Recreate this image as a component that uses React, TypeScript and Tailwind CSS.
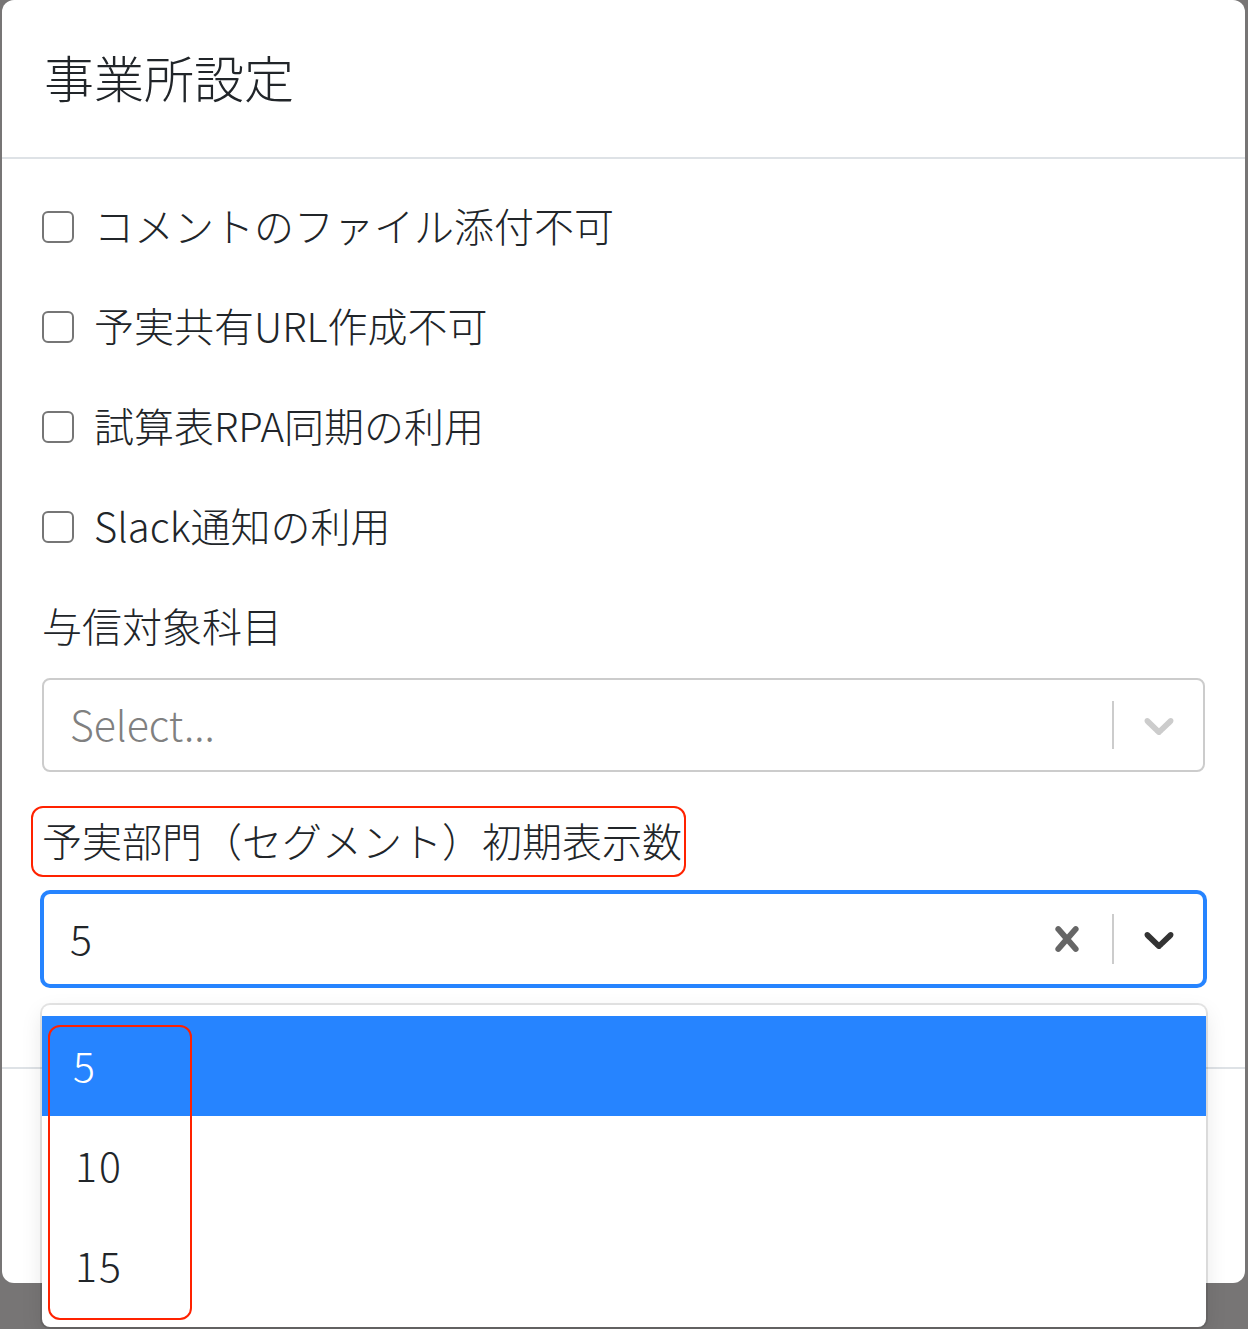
import React from "react";

const FONT = { fontFamily: '"Noto Sans CJK JP", "Noto Sans", sans-serif' };

function Chevron({ className }: { className: string }) {
  return (
    <svg viewBox="0 0 20 20" className={className} fill="currentColor" aria-hidden="true">
      <path d="M4.516 7.548c0.436-0.446 1.043-0.481 1.576 0l3.908 3.747 3.908-3.747c0.533-0.481 1.141-0.446 1.574 0 0.436 0.445 0.408 1.197 0 1.615-0.406 0.418-4.695 4.502-4.695 4.502-0.217 0.223-0.502 0.335-0.787 0.335s-0.57-0.112-0.789-0.335c0 0-4.287-4.084-4.695-4.502s-0.436-1.17 0-1.615z" />
    </svg>
  );
}

function Cross({ className }: { className: string }) {
  return (
    <svg viewBox="0 0 20 20" className={className} fill="currentColor" aria-hidden="true">
      <path d="M14.348 14.849c-0.469 0.469-1.229 0.469-1.697 0l-2.651-3.030-2.651 3.029c-0.469 0.469-1.229 0.469-1.697 0-0.469-0.469-0.469-1.229 0-1.697l2.758-3.15-2.759-3.152c-0.469-0.469-0.469-1.228 0-1.697s1.228-0.469 1.697 0l2.652 3.031 2.651-3.031c0.469-0.469 1.228-0.469 1.697 0s0.469 1.229 0 1.697l-2.758 3.152 2.758 3.15c0.469 0.469 0.469 1.229 0 1.698z" />
    </svg>
  );
}

function CheckRow({ label }: { label: string }) {
  return (
    <div className="flex h-[100px] items-center gap-[20px]">
      <span className="h-[32px] w-[32px] shrink-0 rounded-[6px] border-2 border-[#767676] bg-white" />
      <span className="pb-[4px] text-[40px] font-light leading-none text-[#212529]">{label}</span>
    </div>
  );
}

export default function App() {
  return (
    <div className="relative h-[1329px] w-[1248px] overflow-hidden bg-[#777575]" style={FONT}>
      <div className="ml-[2px] flex h-[1283px] w-[1243px] flex-col rounded-[12px] bg-white">
        {/* header */}
        <div className="flex h-[159px] shrink-0 items-center border-b-2 border-[#dee2e6] px-[42px]">
          <h2 className="pb-[6px] text-[50px] font-light leading-none text-[#212529]">事業所設定</h2>
        </div>

        {/* body */}
        <div className="h-[908px] shrink-0 px-[40px] pt-[18px]">
          <CheckRow label="コメントのファイル添付不可" />
          <CheckRow label="予実共有URL作成不可" />
          <CheckRow label="試算表RPA同期の利用" />
          <CheckRow label="Slack通知の利用" />

          <div className="flex h-[100px] items-center pb-[4px] text-[40px] font-light leading-none text-[#212529]">与信対象科目</div>

          <div className="mb-[19px] mt-[1px] flex h-[94px] items-center rounded-[8px] border-2 border-[#cccccc] bg-white">
            <div className="flex-1 pb-[4px] pl-[26px] text-[41px] font-light leading-none text-[#808080]">Select...</div>
            <span className="h-[48px] w-[2px] bg-[#cccccc]" />
            <div className="flex w-[89px] items-center justify-center text-[#cccccc]">
              <Chevron className="h-[50px] w-[50px]" />
            </div>
          </div>

          <div className="relative flex h-[101px] items-center">
            <span className="pb-[4px] text-[40px] font-light leading-none text-[#212529]">予実部門（セグメント）初期表示数</span>
            <span className="pointer-events-none absolute left-[-11px] top-[15px] h-[71px] w-[655px] rounded-[12px] border-2 border-[#ff2200]" />
          </div>

          <div className="relative">
            <div className="flex h-[94px] items-center rounded-[8px] border-2 border-[#2684ff] bg-white shadow-[0_0_0_2px_#2684ff]">
              <div className="flex-1 pb-[4px] pl-[26px] text-[41px] font-light leading-none text-[#212529]">5</div>
              <div className="flex w-[90px] items-center justify-center text-[#666666]">
                <Cross className="h-[50px] w-[50px]" />
              </div>
              <span className="h-[50px] w-[2px] bg-[#cccccc]" />
              <div className="flex w-[89px] items-center justify-center text-[#333333]">
                <Chevron className="h-[50px] w-[50px]" />
              </div>
            </div>

            {/* menu */}
            <div className="absolute left-0 right-[-1px] top-[113px] z-10 h-[322px] rounded-[8px] bg-white py-[11px] shadow-[0_0_0_2px_rgba(0,0,0,0.1),0_8px_22px_rgba(0,0,0,0.1)]">
              <div className="flex h-[100px] items-center bg-[#2684ff] pb-[4px] pl-[31px] text-[41px] font-light leading-none text-white">5</div>
              <div className="flex h-[100px] items-center pb-[4px] pl-[33px] text-[41px] font-light leading-none tracking-[2px] text-[#212529]">10</div>
              <div className="flex h-[100px] items-center pb-[4px] pl-[33px] text-[41px] font-light leading-none tracking-[2px] text-[#212529]">15</div>
              <span className="pointer-events-none absolute left-[6px] top-[20px] h-[295px] w-[144px] rounded-[12px] border-2 border-[#ff2200]" />
            </div>
          </div>
        </div>

        {/* footer */}
        <div className="flex-1 border-t-2 border-[#dee2e6]" />
      </div>
    </div>
  );
}
